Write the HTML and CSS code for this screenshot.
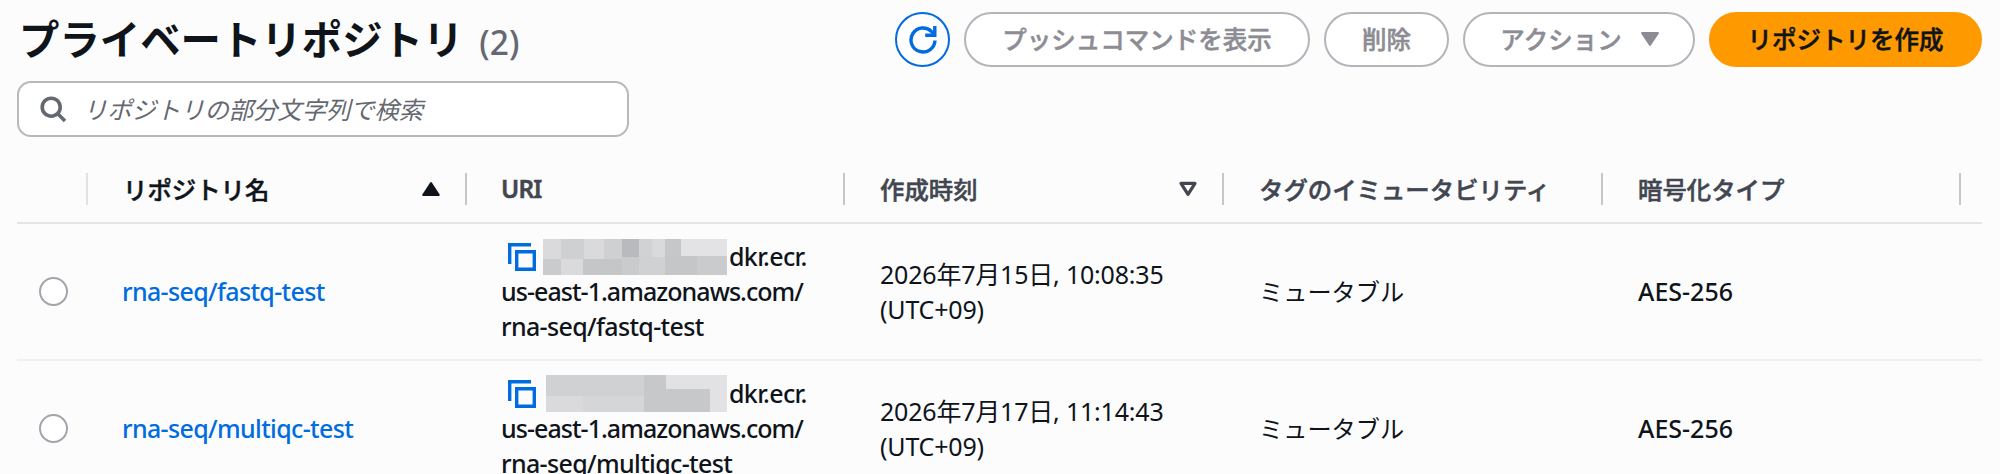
FILE: index.html
```html
<!DOCTYPE html>
<html lang="ja">
  <head>
    <meta charset="UTF-8" />
    <meta name="viewport" content="width=device-width, initial-scale=1.0" />
    <title>プライベートリポジトリ</title>
    <link rel="stylesheet" href="styles.css">
  </head>
  <body>
    <header class="header">
      <h1 class="title">プライベートリポジトリ<span class="count">(2)</span></h1>
      <div class="actions">
        <button class="btn btn-icon" aria-label="更新">
          <svg width="30" height="30" viewBox="0 0 30 30" fill="none" stroke="currentColor" stroke-width="3.4">
            <path d="M27 15.5a12 12 0 1 1-3.4-8.9l2.4 2.6" />
            <path d="M26.8 1v9.2h-9.6" />
          </svg>
        </button>
        <button class="btn btn-push">プッシュコマンドを表示</button>
        <button class="btn btn-delete">削除</button>
        <button class="btn btn-action">
          アクション
          <svg width="20" height="16" viewBox="0 0 20 16" fill="currentColor" stroke="currentColor" stroke-width="2" stroke-linejoin="round">
            <path d="M2 2h16l-8 12z" />
          </svg>
        </button>
        <button class="btn btn-primary">リポジトリを作成</button>
      </div>
    </header>

    <div class="search">
      <svg width="27" height="27" viewBox="0 0 27 27" fill="none" stroke="currentColor" stroke-width="3.6">
        <circle cx="11.2" cy="11.2" r="9" />
        <path d="M17.5 17.5l7.5 7.5" />
      </svg>
      <input class="search-input" type="text" placeholder="リポジトリの部分文字列で検索" />
    </div>

    <div class="table">
      <div class="row head">
        <div class="th th-check"></div>
        <div class="th th-sorted">
          <span>リポジトリ名</span>
          <svg width="20" height="16" viewBox="0 0 20 16" fill="currentColor" stroke="currentColor" stroke-width="2" stroke-linejoin="round">
            <path d="M10 2l7.8 12H2.2z" />
          </svg>
        </div>
        <div class="th"><span class="latin">URI</span></div>
        <div class="th">
          <span>作成時刻</span>
          <svg width="20" height="16" viewBox="0 0 20 16" fill="none" stroke="currentColor" stroke-width="3.2" stroke-linejoin="round">
            <path d="M3 2.4h14L10 13.4z" />
          </svg>
        </div>
        <div class="th">タグのイミュータビリティ</div>
        <div class="th th-last">暗号化タイプ</div>
      </div>

      <div class="row">
        <div class="td td-check"><span class="radio"></span></div>
        <div class="td td-latin"><a class="link">rna-seq/fastq-test</a></div>
        <div class="td td-latin">
          <div class="uri">
            <div class="uri-top">
              <svg class="copy" width="28" height="28" viewBox="0 0 28 28" fill="none" stroke="currentColor" stroke-width="3.4">
                <path d="M1.7 21V1.7H23" />
                <path d="M8.7 8.7h17.6v17.6H8.7z" />
              </svg>
              <svg class="mask" width="184" height="36" viewBox="0 0 184 36" shape-rendering="crispEdges">
                <path fill="#dadadc" d="M0 0h184v36H0z" />
                <path fill="#cfd0d2" d="M18 0h23v20H18zM61 0h18v20H61z" />
                <path fill="#b9babd" d="M79 0h17v18H79z" />
                <path fill="#d1d2d4" d="M96 0h13v18H96z" />
                <path fill="#c6c7c9" d="M122 0h16v18h-16z" />
                <path fill="#e3e3e5" d="M138 0h46v17h-46z" />
                <path fill="#cacbcd" d="M0 20h18v16H0z" />
                <path fill="#c5c6c8" d="M40 20h39v16H40zM122 17h32v19h-32z" />
                <path fill="#cacbcd" d="M79 18h17v18H79zM154 17h30v19h-30z" />
                <path fill="#d0d1d3" d="M96 18h26v18H96z" />
              </svg>
              <span>dkr.ecr.</span>
            </div>
            <div class="uri-host">us-east-1.amazonaws.com/</div>
            <div>rna-seq/fastq-test</div>
          </div>
        </div>
        <div class="td"><div class="date">2026年7月15日, 10:08:35<br>(UTC+09)</div></div>
        <div class="td td-ja">ミュータブル</div>
        <div class="td td-last">AES-256</div>
      </div>

      <div class="row">
        <div class="td td-check"><span class="radio"></span></div>
        <div class="td td-latin"><a class="link">rna-seq/multiqc-test</a></div>
        <div class="td td-latin">
          <div class="uri">
            <div class="uri-top">
              <svg class="copy" width="28" height="28" viewBox="0 0 28 28" fill="none" stroke="currentColor" stroke-width="3.4">
                <path d="M1.7 21V1.7H23" />
                <path d="M8.7 8.7h17.6v17.6H8.7z" />
              </svg>
              <svg class="mask" width="184" height="37" viewBox="0 0 184 37" shape-rendering="crispEdges">
                <path fill="#d0d1d3" d="M3 0h98v21H3z" />
                <path fill="#dadadc" d="M3 21h37v16H3z" />
                <path fill="#d5d6d8" d="M40 21h61v16H40z" />
                <path fill="#c7c8ca" d="M101 0h22v14h44v23h-66z" />
                <path fill="#e2e2e4" d="M123 0h61v37h-17V14h-44z" />
              </svg>
              <span>dkr.ecr.</span>
            </div>
            <div class="uri-host">us-east-1.amazonaws.com/</div>
            <div>rna-seq/multiqc-test</div>
          </div>
        </div>
        <div class="td"><div class="date">2026年7月17日, 11:14:43<br>(UTC+09)</div></div>
        <div class="td td-ja">ミュータブル</div>
        <div class="td td-last">AES-256</div>
      </div>
    </div>
  </body>
</html>
```

FILE: styles.css
```css
* {
  box-sizing: border-box;
}
body {
  margin: 0;
  height: 474px;
  padding: 12px 18px 0 17px;
  overflow: hidden;
  background-color: #fcfcfd;
  color: #0f141a;
  font-family: "Noto Sans", "Noto Sans CJK JP", sans-serif;
  font-size: 25px;
  line-height: 35px;
}
.header {
  display: flex;
  justify-content: space-between;
  height: 55px;
}
.title {
  margin: 0;
  padding-left: 2px;
  font-family: "Noto Sans CJK JP", sans-serif;
  font-size: 40.4px;
  line-height: 52px;
  font-weight: 700;
  white-space: nowrap;
}
.count {
  margin-left: 16px;
  font-family: "Noto Sans", sans-serif;
  font-size: 33.5px;
  font-weight: 500;
  color: #656871;
}
.actions {
  display: flex;
  gap: 14px;
}
.btn {
  display: flex;
  justify-content: center;
  align-items: center;
  height: 55px;
  padding: 0 0 2px;
  border: 2.5px solid #b4b4bb;
  border-radius: 28px;
  background-color: #fff;
  color: #8c8c94;
  font-family: "Noto Sans CJK JP", sans-serif;
  font-size: 24.5px;
  font-weight: 500;
  -webkit-text-stroke: 0.5px;
  white-space: nowrap;
}
.btn-icon {
  width: 55px;
  padding-bottom: 0;
  border-color: #006ce0;
  color: #006ce0;
}
.btn-push {
  width: 346px;
}
.btn-delete {
  width: 125px;
}
.btn-action {
  width: 232px;
  padding-left: 2px;
  gap: 18px;
}
.btn-primary {
  width: 273px;
  border-color: #ff9900;
  background-color: #ff9900;
  color: #0f141a;
}
.search {
  display: flex;
  align-items: center;
  gap: 16px;
  width: 612px;
  height: 56px;
  margin-top: 14px;
  padding-left: 21px;
  border: 2px solid #b8b8bd;
  border-radius: 14px;
  background-color: #fff;
  color: #656871;
}
.search-input {
  flex: 1;
  padding: 0 0 2px;
  border: 0;
  outline: 0;
  background: none;
  font-family: "Noto Sans CJK JP", sans-serif;
  font-size: 24.3px;
  font-style: italic;
}
.search-input::placeholder {
  color: #656871;
}
.table {
  margin-top: 18px;
}
.row {
  display: grid;
  grid-template-columns: 71px 379px 378px 379px 379px 1fr;
  height: 137px;
  border-bottom: 2px solid #f0f0f2;
}
.head {
  height: 69px;
  align-items: center;
  border-bottom: 2px solid #e4e4e7;
}
.th {
  display: flex;
  justify-content: space-between;
  align-items: center;
  height: 32px;
  padding: 0 24px 0 35px;
  border-right: 2px solid #c6c6cd;
  color: #424650;
  font-family: "Noto Sans CJK JP", sans-serif;
  font-size: 24.4px;
  font-weight: 500;
  -webkit-text-stroke: 0.5px;
}
.th-check {
  border-color: #e2e2e6;
}
.th-sorted {
  color: #0f141a;
}
.th-last {
  margin-right: 21px;
}
.latin {
  margin-left: -1px;
  font-family: "Noto Sans", sans-serif;
  font-weight: 600;
  letter-spacing: -0.8px;
}
.td {
  display: flex;
  align-items: center;
  padding-left: 35px;
  white-space: nowrap;
}
.td-check {
  padding-left: 22px;
}
.td-latin {
  padding-left: 34px;
}
.td-ja {
  font-size: 24.2px;
}
.td-last {
  font-weight: 500;
}
.radio {
  width: 29px;
  height: 29px;
  border: 2.5px solid #a4a4ad;
  border-radius: 50%;
  background-color: #fff;
}
.link {
  color: #006ce0;
  font-weight: 500;
  letter-spacing: -0.65px;
}
.uri {
  font-weight: 500;
  letter-spacing: -0.65px;
}
.uri-top {
  display: flex;
  align-items: center;
  height: 35px;
}
.uri-host {
  letter-spacing: -0.95px;
}
.copy {
  margin: 0 7px;
  color: #006ce0;
}
.mask {
  margin-right: 2px;
}
.date {
  letter-spacing: -0.2px;
}
```
